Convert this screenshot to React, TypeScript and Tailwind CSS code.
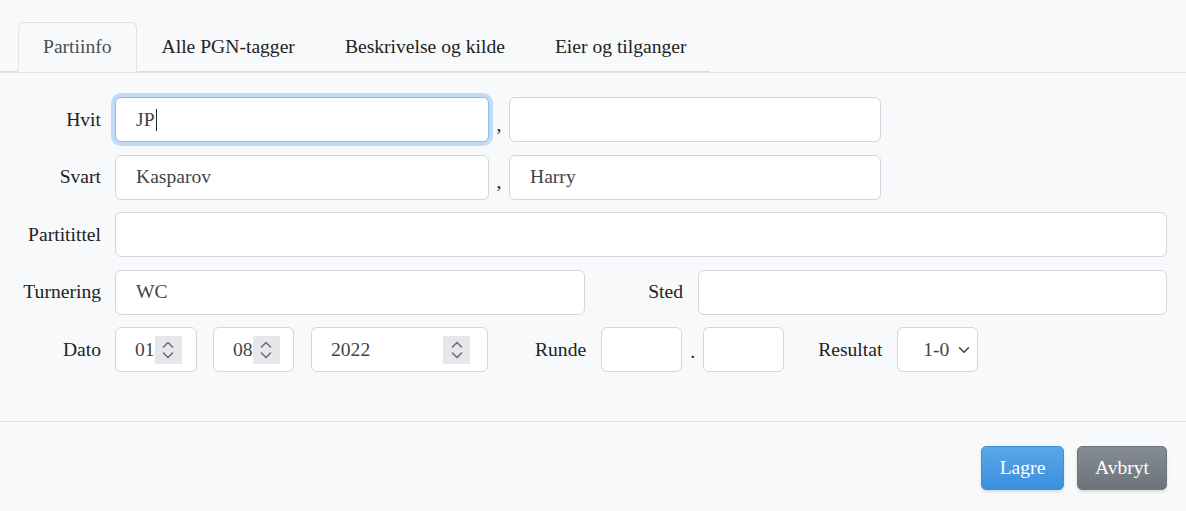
import { ChevronDown } from "lucide-react"

const TABS = ["Partiinfo", "Alle PGN-tagger", "Beskrivelse og kilde", "Eier og tilganger"]

/** Fake number spinner, drawn like Chromium's */
function Spinner() {
  return (
    <span className="flex h-[28px] w-[27px] shrink-0 items-center justify-center bg-[#e6e6eb]">
      <svg width="14" height="22" viewBox="0 0 14 22" fill="none" stroke="#6f6f78" strokeWidth="1.6" strokeLinecap="round" strokeLinejoin="round">
        <path d="M2.5 8 L7 3.5 L11.5 8" />
        <path d="M2.5 14 L7 18.5 L11.5 14" />
      </svg>
    </span>
  )
}

function Field({ value = "", width, focused = false }: { value?: string; width: string; focused?: boolean }) {
  return (
    <div
      className={
        "flex h-[45px] shrink-0 items-center rounded-[6px] border bg-white px-5 text-[#444] " +
        width +
        (focused ? " border-[#8bbcf0] ring-4 ring-[#c3dcf5]" : " border-[#d3d6dc]")
      }
    >
      {value}
      {focused && <span className="ml-[1px] inline-block h-[22px] w-px bg-[#222]" />}
    </div>
  )
}

function NumberField({ value, width }: { value: string; width: string }) {
  return (
    <div
      className={
        "flex h-[45px] shrink-0 items-center justify-between rounded-[6px] border border-[#d3d6dc] bg-white pl-[19px] pr-[17px] text-[#444] " +
        width
      }
    >
      <span className="whitespace-nowrap">{value}</span>
      <Spinner />
    </div>
  )
}

function Label({ children }: { children: string }) {
  return <div className="w-[101px] shrink-0 text-right text-[#222]">{children}</div>
}

export default function App() {
  return (
    <div className="h-[511px] w-full bg-[#f8f9fa] font-['Liberation_Serif','Times_New_Roman',serif] text-[19.6px] text-[#222]">
      {/* Tabs */}
      <div className="border-b border-[#e2e4e8] pt-[22px]">
        <div className="flex w-[710px] border-b border-[#dcdde3] pl-[18px]">
          {TABS.map((tab, i) => (
            <div
              key={tab}
              className={
                "-mb-px flex h-[50px] shrink-0 items-center whitespace-nowrap rounded-t-[6px] border px-[24px] " +
                (i === 0
                  ? "border-[#e0e2e6] border-b-[#f8f9fa] bg-[#f8f9fa] text-[#495057]"
                  : "border-transparent text-[#222]")
              }
            >
              {tab}
            </div>
          ))}
        </div>
      </div>

      {/* Form */}
      <div className="flex flex-col gap-[12.5px] pr-[19px] pt-[24px]">
        <div className="flex items-center">
          <Label>Hvit</Label>
          <div className="ml-[14px] flex items-center">
            <Field value="JP" width="w-[374px]" focused />
            <span className="w-[20px] pt-[10px] text-center">,</span>
            <Field width="w-[372px]" />
          </div>
        </div>

        <div className="flex items-center">
          <Label>Svart</Label>
          <div className="ml-[14px] flex items-center">
            <Field value="Kasparov" width="w-[374px]" />
            <span className="w-[20px] pt-[10px] text-center">,</span>
            <Field value="Harry" width="w-[372px]" />
          </div>
        </div>

        <div className="flex items-center">
          <Label>Partitittel</Label>
          <div className="ml-[14px] flex flex-1">
            <Field width="w-full" />
          </div>
        </div>

        <div className="flex items-center">
          <Label>Turnering</Label>
          <div className="ml-[14px] flex flex-1 items-center">
            <Field value="WC" width="w-[470px]" />
            <div className="w-[98px] shrink-0 text-right">Sted</div>
            <div className="ml-[15px] flex flex-1">
              <Field width="w-full" />
            </div>
          </div>
        </div>

        <div className="flex items-center">
          <Label>Dato</Label>
          <div className="ml-[14px] flex items-center">
            <NumberField value="01" width="w-[82px]" />
            <div className="ml-[16px]">
              <NumberField value="08" width="w-[81px]" />
            </div>
            <div className="ml-[17px]">
              <NumberField value="2022" width="w-[177px]" />
            </div>
            <div className="ml-[47px]">Runde</div>
            <div className="ml-[15px]">
              <Field width="w-[81px]" />
            </div>
            <span className="w-[21px] pt-[4px] text-center">.</span>
            <Field width="w-[81px]" />
            <div className="ml-[34px]">Resultat</div>
            <div className="ml-[15px] flex h-[45px] w-[81px] items-center justify-end gap-[6px] rounded-[6px] border border-[#d3d6dc] bg-white pr-[4px] text-[#444]">
              <span>1-0</span>
              <ChevronDown size={18} strokeWidth={2} className="text-[#444]" />
            </div>
          </div>
        </div>
      </div>

      {/* Footer */}
      <div className="mt-[49px] border-t border-[#dcdde3]">
        <div className="flex justify-end gap-[13px] pr-[19px] pt-[24px]">
          <button className="h-[44px] w-[83px] rounded-[5px] border border-[#3d8fdc] bg-gradient-to-b from-[#5aa6e8] to-[#3a8fdf] text-white shadow-[0_2px_3px_rgba(0,0,0,0.12)]">
            Lagre
          </button>
          <button className="h-[44px] w-[90px] rounded-[5px] border border-[#6c737a] bg-gradient-to-b from-[#868c93] to-[#6c737a] text-white shadow-[0_2px_3px_rgba(0,0,0,0.12)]">
            Avbryt
          </button>
        </div>
      </div>
    </div>
  )
}
